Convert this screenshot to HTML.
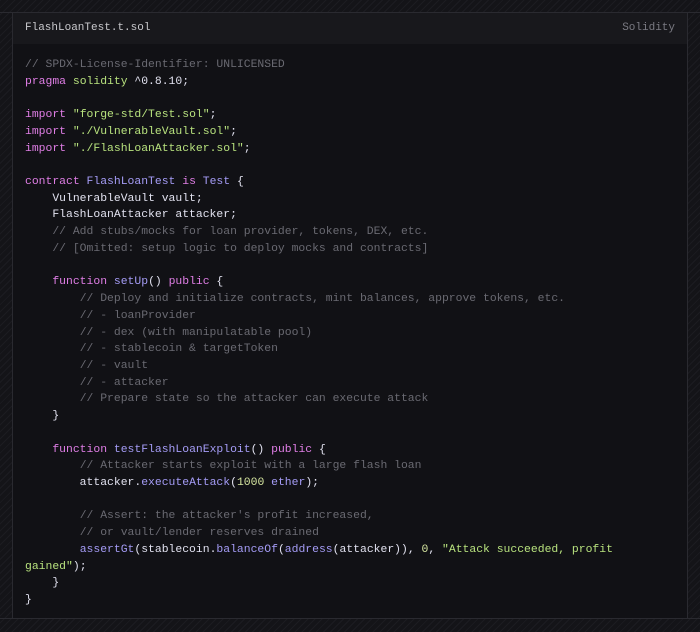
<!DOCTYPE html>
<html><head><meta charset="utf-8"><style>
html,body{margin:0;padding:0;}
body{width:700px;height:632px;overflow:hidden;position:relative;
background:#16161a repeating-linear-gradient(135deg,#1c1c21 0 1px,#141418 1px 5px);}
.panel{position:absolute;left:12px;top:12px;width:676px;height:607px;background:#111115;
border:1px solid #2a2a30;box-sizing:border-box;}
.hl{position:absolute;left:0;right:0;height:1px;background:#2a2a30}
.head{position:absolute;left:0;top:0;right:0;height:31px;background:#18181c;}
.head .f{position:absolute;left:12px;top:9px;font:11px "Liberation Mono",monospace;color:#c8c8cc;}
.head .l{position:absolute;right:12px;top:9px;font:11px "Liberation Mono",monospace;color:#7a7a82;}
pre{position:absolute;left:12px;top:44px;margin:0;font:11.4px/16.72px "Liberation Mono",monospace;color:#e2e2f0;white-space:pre;}
.k{color:#e07ee6}.s{color:#b8e27e}.t{color:#a59cf6}.c{color:#6a6a72}.n{color:#d6e6a0}
</style></head><body>
<div class="hl" style="top:12px"></div>
<div class="hl" style="top:618px"></div>
<div class="panel">
<div class="head"><span class="f">FlashLoanTest.t.sol</span><span class="l">Solidity</span></div>
<pre><span class="c">// SPDX-License-Identifier: UNLICENSED</span>
<span class="k">pragma</span> <span class="s">solidity</span> ^0.8.10;

<span class="k">import</span> <span class="s">"forge-std/Test.sol"</span>;
<span class="k">import</span> <span class="s">"./VulnerableVault.sol"</span>;
<span class="k">import</span> <span class="s">"./FlashLoanAttacker.sol"</span>;

<span class="k">contract</span> <span class="t">FlashLoanTest</span> <span class="k">is</span> <span class="t">Test</span> {
    VulnerableVault vault;
    FlashLoanAttacker attacker;
    <span class="c">// Add stubs/mocks for loan provider, tokens, DEX, etc.</span>
    <span class="c">// [Omitted: setup logic to deploy mocks and contracts]</span>

    <span class="k">function</span> <span class="t">setUp</span>() <span class="k">public</span> {
        <span class="c">// Deploy and initialize contracts, mint balances, approve tokens, etc.</span>
        <span class="c">// - loanProvider</span>
        <span class="c">// - dex (with manipulatable pool)</span>
        <span class="c">// - stablecoin &amp; targetToken</span>
        <span class="c">// - vault</span>
        <span class="c">// - attacker</span>
        <span class="c">// Prepare state so the attacker can execute attack</span>
    }

    <span class="k">function</span> <span class="t">testFlashLoanExploit</span>() <span class="k">public</span> {
        <span class="c">// Attacker starts exploit with a large flash loan</span>
        attacker.<span class="t">executeAttack</span>(<span class="n">1000</span> <span class="t">ether</span>);

        <span class="c">// Assert: the attacker's profit increased,</span>
        <span class="c">// or vault/lender reserves drained</span>
        <span class="t">assertGt</span>(stablecoin.<span class="t">balanceOf</span>(<span class="t">address</span>(attacker)), <span class="n">0</span>, <span class="s">"Attack succeeded, profit</span>
<span class="s">gained"</span>);
    }
}</pre>
</div>
</body></html>
